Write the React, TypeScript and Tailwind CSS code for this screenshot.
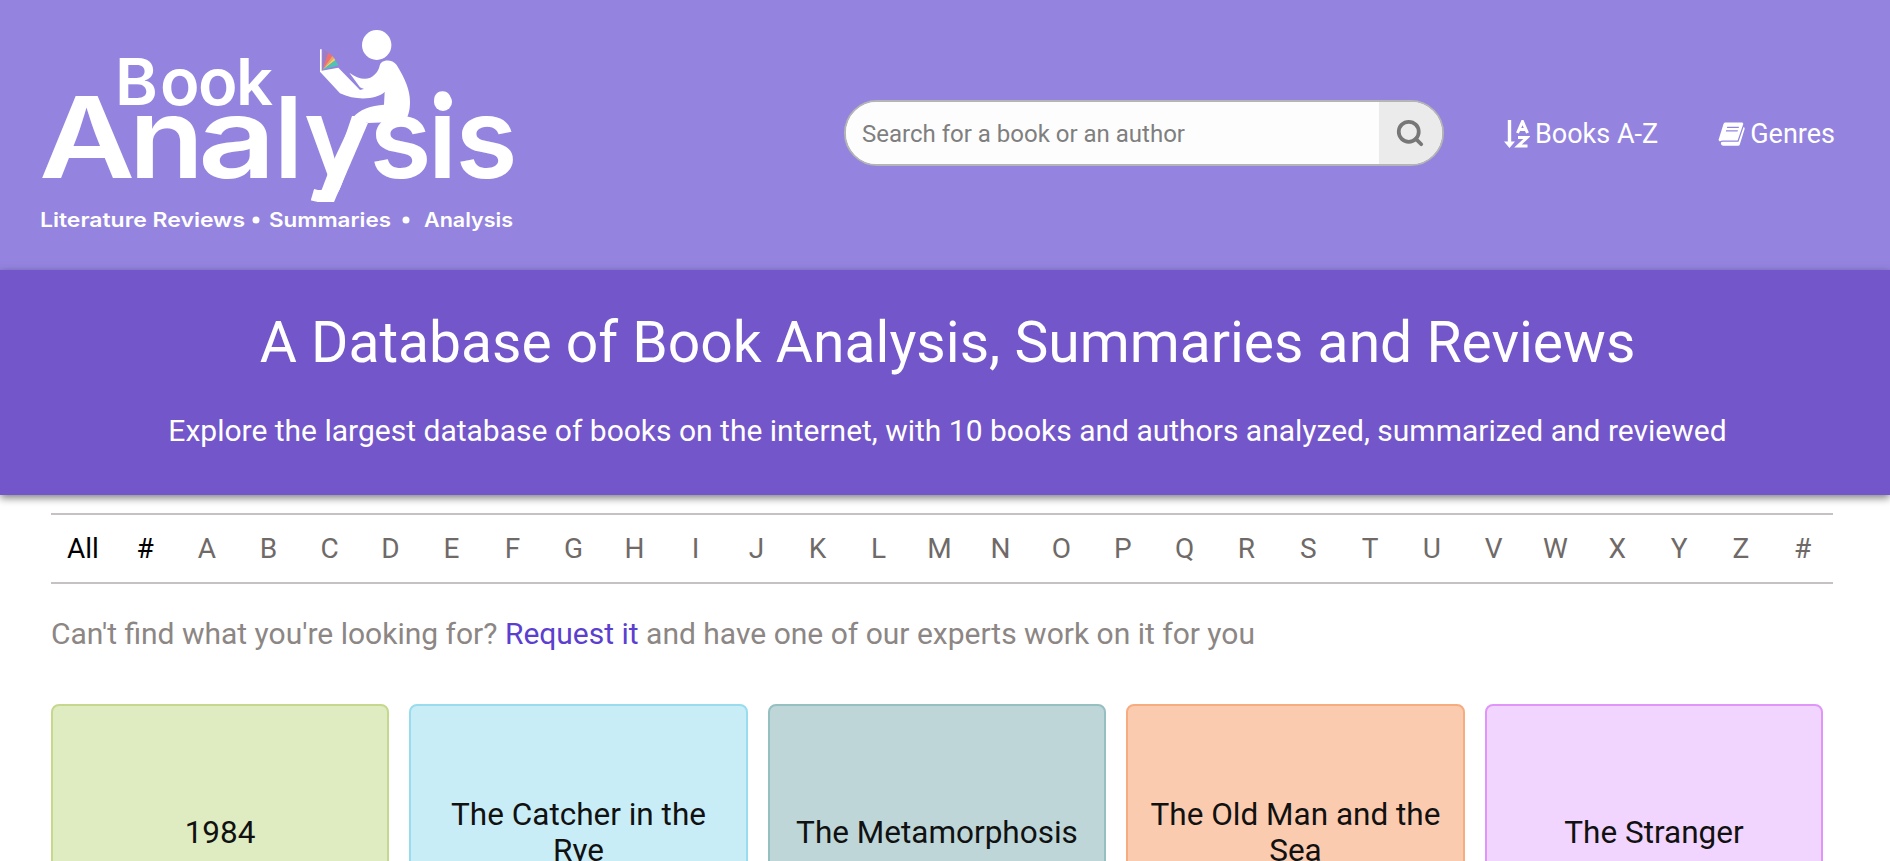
import { Search } from "lucide-react";

const letters = ["All", "#", ..."ABCDEFGHIJKLMNOPQRSTUVWXYZ".split(""), "#"];
const cards = [
  { title: "1984", cls: "bg-[#dfebc1] border-[#c5d88e]" },
  { title: "The Catcher in the Rye", cls: "bg-[#c9edf7] border-[#98dcee]" },
  { title: "The Metamorphosis", cls: "bg-[#bed6d8] border-[#96bfc1]" },
  { title: "The Old Man and the Sea", cls: "bg-[#fbcbb0] border-[#f7ab80]" },
  { title: "The Stranger", cls: "bg-[#f1d5fe] border-[#e096f9]" },
];

function Logo() {
  return (
    <svg width="560" height="270" viewBox="0 0 560 270" className="shrink-0" role="img" aria-label="Book Analysis">
      <g fill="#fff" fontFamily="Inter, sans-serif">
        <text x="115 160 198 236" y="105" fontSize="65" fontWeight="600">Book</text>
        <text y="178" fontSize="113" fontWeight="600">
          <tspan x="39" textLength="96" lengthAdjust="spacingAndGlyphs">A</tspan>
          <tspan x="129" textLength="75" lengthAdjust="spacingAndGlyphs">n</tspan>
          <tspan x="198" textLength="78" lengthAdjust="spacingAndGlyphs">a</tspan>
          <tspan x="274" textLength="29" lengthAdjust="spacingAndGlyphs">l</tspan>
          <tspan x="304" textLength="65" lengthAdjust="spacingAndGlyphs">y</tspan>
          <tspan x="369.5" textLength="62" lengthAdjust="spacingAndGlyphs">s</tspan>
          <tspan x="428" textLength="29" lengthAdjust="spacingAndGlyphs">i</tspan>
          <tspan x="455.5" textLength="62" lengthAdjust="spacingAndGlyphs">s</tspan>
        </text>
        <g fontSize="20" fontWeight="600">
          <text x="40" y="227" textLength="205" lengthAdjust="spacingAndGlyphs">Literature Reviews</text>
          <circle cx="256" cy="220" r="3.5" />
          <text x="269" y="227" textLength="122" lengthAdjust="spacingAndGlyphs">Summaries</text>
          <circle cx="406" cy="220" r="3.5" />
          <text x="424" y="227" textLength="89" lengthAdjust="spacingAndGlyphs">Analysis</text>
        </g>
        <circle cx="443" cy="102" r="9" />
        <ellipse cx="376.7" cy="45" rx="14.7" ry="15" />
        <path d="M354 117 L368 123 L334 202 L317 202 L330 168 Z" />
        <g transform="translate(300 30) scale(0.3333)">
          <path d="M60 58 L65 58 L65 122 L115 113 L180 180 L226 168 C222 180 200 184 180 172 L148 128 C175 148 205 155 225 133 C238 120 238 108 240 104 C245 90 275 85 290 105 C315 145 330 180 330 215 C330 240 326 255 318 268 L300 275 L204 279 L160 262 C175 240 215 226 252 224 L254 186 C230 208 170 214 120 190 L60 125 Z" />
          <path d="M68 119 L70 58 L85 68 Z" fill="#a07cc0" />
          <path d="M68 119 L85 68 L97 78 Z" fill="#f26f6f" />
          <path d="M68 119 L97 78 L102 84 Z" fill="#f5a55c" />
          <path d="M68 119 L102 84 L106 91 Z" fill="#f7d160" />
          <path d="M68 119 L106 91 L115 106 Z" fill="#4fc4b0" />
        </g>
      </g>
    </svg>
  );
}

function SortIcon() {
  return (
    <svg width="26" height="28" viewBox="0 0 26 28" fill="none" stroke="#fff" strokeWidth="3" className="shrink-0">
      <path d="M5.5 0V23" strokeWidth="3.4" />
      <path d="M0 21.5H11L5.5 28Z" fill="#fff" stroke="none" />
      <path d="M13.5 13L18.5 1.5L23.5 13M15 9.5H22" />
      <path d="M14 17.5H23L14 26H23.5" />
    </svg>
  );
}

function BookIcon() {
  return (
    <svg width="27" height="24" viewBox="0 0 27 24" fill="#fff" className="shrink-0">
      <path fillRule="evenodd" d="M7 0.5H24Q25.6 0.5 25.2 2.3L19.6 18.5H5Q3 18.5 1.8 19.6L0.5 18L5.5 2Q6 0.5 7 0.5ZM9.2 4.7L8.9 6H20.7L21 4.7ZM8.1 8.2L7.8 9.5H19.6L19.9 8.2Z" />
      <path d="M2.8 21Q3 19.8 5 19.8H20.5L25.6 5Q27 5.5 26.6 7L21.8 22.5Q21.5 23.7 20 23.7H5Q3 23.7 2.8 21Z" />
    </svg>
  );
}

export default function App() {
  return (
    <div className="h-screen overflow-hidden bg-white font-['Roboto',sans-serif]">
      <header className="flex h-[270px] items-center bg-[#9484e0]">
        <Logo />
        <form className="mb-[4px] ml-[284px] flex h-[66px] w-[600px] overflow-hidden rounded-full border-2 border-[#b5b5b5] bg-white">
          <input
            className="min-w-0 flex-1 bg-[#fdfdfd] pt-[2px] pl-[16px] text-[24px] text-[#777] outline-none placeholder:text-[#7f7f7f]"
            placeholder="Search for a book or an author"
          />
          <button type="button" className="flex w-[63px] items-center justify-center bg-[#ebebeb] pr-[2px] text-[#777]">
            <Search size={30} strokeWidth={3} />
          </button>
        </form>
        <nav className="mb-[2px] flex items-center text-[27px] text-white">
          <a className="ml-[60px] flex items-center gap-[5px]">
            <SortIcon />
            Books A-Z
          </a>
          <a className="ml-[60px] flex items-center gap-[5px]">
            <BookIcon />
            Genres
          </a>
        </nav>
      </header>

      <section className="relative flex h-[225px] flex-col items-center bg-[#7356c9] pt-[38px] pl-[5px] text-white shadow-[0_3px_8px_rgba(0,0,0,0.5)]">
        <h1 className="text-[57px] leading-[70px] font-normal">A Database of Book Analysis, Summaries and Reviews</h1>
        <p className="mt-[35px] text-[30px] leading-[36px]">
          Explore the largest database of books on the internet, with 10 books and authors analyzed, summarized and reviewed
        </p>
      </section>

      <main className="px-[51px]">
        <div className="mt-[18px] grid h-[71px] w-[1782px] grid-cols-[repeat(3,62px)_repeat(14,61px)_repeat(12,61.8px)] items-center border-y-2 border-[#c6c2c4] pl-[1px] text-center text-[28px] text-[#6f6a68]">
          {letters.map((l, i) => (
            <a key={i} className={i < 2 ? "text-black" : ""}>
              {l}
            </a>
          ))}
        </div>
        <p className="mt-[32px] text-[30px] leading-[36px] text-[#8c8684]">
          Can't find what you're looking for? <a className="text-[#5b3fcf]">Request it</a> and have one of our experts work on it for you
        </p>
        <div className="mt-[52px] grid w-[1772px] grid-cols-5 gap-x-[20.4px]">
          {cards.map((c) => (
            <div key={c.title} className={`flex h-[258px] items-center justify-center rounded-[8px] border-2 px-[20px] text-center text-[31.5px] leading-[36px] text-[#111] ${c.cls}`}>
              {c.title}
            </div>
          ))}
        </div>
      </main>
    </div>
  );
}
